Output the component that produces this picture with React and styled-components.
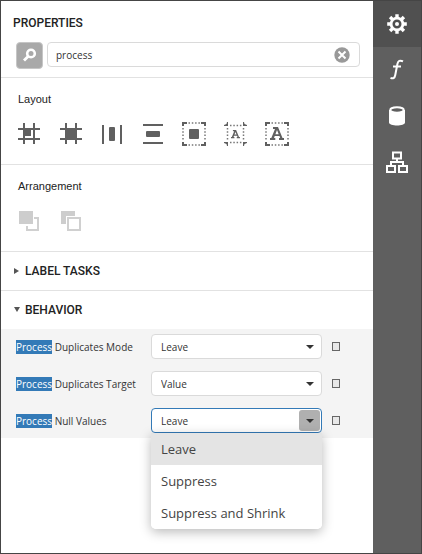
import React, { useState } from "react";
import styled, { createGlobalStyle, css } from "styled-components";

const GlobalStyle = createGlobalStyle`
  *, *::before, *::after { box-sizing: border-box; }
  body { margin: 0; background: #fff; }
  button, input, select { font: inherit; color: inherit; }
`;

const uiFont = `"Open Sans", "Noto Sans", sans-serif`;
const headingFont = `Roboto, "Liberation Sans", sans-serif`;

const Frame = styled.div`
  display: flex;
  min-height: 100vh;
  border: 1px solid #454545;
  background: #fff;
  color: #333;
  font-family: ${uiFont};
  font-size: 10px;
`;

const Panel = styled.main`
  flex: 1;
  min-width: 0;
`;

const Header = styled.header`
  padding: 14px 13px 8px 12px;
  border-bottom: 1px solid #e2e2e2;
`;

const Title = styled.h1`
  margin: 0;
  font: 500 12px/16px ${headingFont};
  color: #222;
`;

const SearchRow = styled.div`
  display: flex;
  align-items: flex-start;
  gap: 4px;
  margin: 11px 0 0 3px;
`;

const SearchButton = styled.button`
  display: flex;
  align-items: center;
  justify-content: center;
  width: 27px;
  height: 27px;
  padding: 0;
  border: 1px solid #c6c6c6;
  border-radius: 4px;
  background: #a9a9a9;
`;

const SearchBox = styled.div`
  display: flex;
  flex: 1;
  align-items: center;
  min-width: 0;
  height: 25px;
  padding: 0 9px 0 8px;
  border: 1px solid #dadada;
  border-radius: 4px;
`;

const SearchInput = styled.input`
  flex: 1;
  min-width: 0;
  padding: 0;
  border: 0;
  outline: 0;
  background: none;
  line-height: 16px;
`;

const IconButton = styled.button`
  display: flex;
  padding: 0;
  border: 0;
  background: none;
`;

const ToolSection = styled.section`
  padding: 13px 17px 17px;
  border-bottom: 1px solid #e2e2e2;
`;

const ToolTitle = styled.h2`
  margin: 0;
  font: 400 11px/16px "Liberation Sans", Arial, sans-serif;
  color: #222;
`;

const Toolbar = styled.div`
  display: flex;
  gap: 16px;
  margin-top: 14px;
`;

const GroupHeading = styled.h2`
  margin: 0;
  border-bottom: ${(p) => (p.$divided ? "1px solid #e2e2e2" : "0")};
`;

const GroupToggle = styled.button`
  display: flex;
  align-items: center;
  gap: 5px;
  width: 100%;
  height: 38px;
  padding: 0 13px;
  border: 0;
  background: none;
  font: 500 12px/16px ${headingFont};
  color: #222;
`;

const Editors = styled.div`
  display: grid;
  gap: 12px;
  padding: 5px 33px 5px 15px;
  background: #f4f4f4;
`;

const EditorRow = styled.div`
  display: grid;
  grid-template-columns: 125px minmax(0, 1fr) 8px;
  align-items: center;
  column-gap: 10px;
`;

const EditorLabel = styled.label`
  line-height: 14px;
  white-space: nowrap;
`;

const Match = styled.mark`
  background: #337ab7;
  color: #fff;
`;

const SelectWrap = styled.div`
  position: relative;
`;

const Select = styled.select`
  display: block;
  width: 100%;
  height: 25px;
  padding: 0 26px 0 9px;
  border: 1px solid ${(p) => (p.$open ? "#337ab7" : "#dadada")};
  border-radius: 4px;
  outline: 0;
  background: #fff;
  appearance: none;
`;

const Arrow = styled.span`
  position: absolute;
  top: 2px;
  right: 2px;
  display: flex;
  align-items: center;
  justify-content: center;
  width: 21px;
  height: 21px;
  border-radius: 3px;
  pointer-events: none;
  ${(p) => p.$open && css`background: #b0b0b0;`}
`;

const Marker = styled.button`
  width: 8px;
  height: 9px;
  padding: 0;
  border: 1px solid #666;
  background: #e8e8e8;
`;

const Popup = styled.ul`
  position: absolute;
  z-index: 1;
  top: 100%;
  left: 0;
  width: 100%;
  margin: 0;
  padding: 0;
  overflow: hidden;
  list-style: none;
  border-radius: 0 0 5px 5px;
  background: #fff;
  box-shadow: 0 3px 12px rgba(0, 0, 0, 0.28);
`;

const Option = styled.li`
  padding: 7px 10px;
  font-size: 13px;
  line-height: 18px;
  color: #444;
  cursor: pointer;
  background: ${(p) => (p.$selected ? "#e4e4e4" : "#fff")};
`;

const Tabs = styled.nav`
  flex: none;
  width: 48px;
  background: #5f5f5f;
`;

const Tab = styled.button`
  display: flex;
  align-items: center;
  justify-content: center;
  width: 100%;
  height: 46px;
  padding: 0;
  border: 0;
  background: ${(p) => (p.$active ? "#505050" : "transparent")};
`;

const Svg = ({ w = 24, h = w, children }) => (
  <svg width={w} height={h} viewBox={`0 0 ${w} ${h}`} fill="none" aria-hidden="true">
    {children}
  </svg>
);

const ToolSvg = ({ children }) => (
  <Svg w={25} h={26}>
    {children}
  </Svg>
);

const ink = "#606060";

const AlignGrid = () => (
  <ToolSvg>
    <path d="M6 8h7v4h-3v3H6z" fill={ink} />
    <path d="M10 12h3v3h-3z" fill={ink} />
    <path d="M6 2v21M16 2v21M0 8h22M0 18h22" stroke={ink} strokeWidth="2" />
    <path d="M7 15h6v2H7zM13 9h2v8h-2z" fill="#fff" />
  </ToolSvg>
);

const SizeGrid = () => (
  <ToolSvg>
    <path d="M7 2v21M17 2v21M1 8h22M1 18h22" stroke={ink} strokeWidth="2" />
    <path d="M7 8h10v10H7z" fill={ink} />
  </ToolSvg>
);

const CenterH = () => (
  <ToolSvg>
    <path d="M3 4v19M21 4v19" stroke={ink} strokeWidth="2" />
    <rect x="9" y="6" width="6" height="14" rx="1" fill={ink} />
  </ToolSvg>
);

const CenterV = () => (
  <ToolSvg>
    <path d="M2 4h20M2 22h20" stroke={ink} strokeWidth="2" />
    <rect x="5" y="10" width="14" height="6" rx="1" fill={ink} />
  </ToolSvg>
);

const BoundsFrame = () => (
  <>
    <path d="M0 5V1h5v2H2v2zM19 1h5v4h-2V3h-3zM0 21h2v2h3v2H0zM22 21h2v4h-5v-2h3z" fill={ink} />
    <path d="M6.500 2h12M6.500 24h12M1 7v13M23 7v13" stroke="#777" strokeWidth="1.500" strokeDasharray="1.500 1.800" />
  </>
);

const FitBounds = () => (
  <ToolSvg>
    <BoundsFrame />
    <rect x="7" y="8" width="10" height="10" rx="1" fill={ink} />
  </ToolSvg>
);

const letterA = "M3 0h5l4.500 11H14v2H9v-2h1.200l-.7-2H4.700L4 11h1.300v2H0v-2h1.300L5 2H3zM7 3 5.400 7.200h3.300z";

const FitText = () => (
  <ToolSvg>
    <path d="M5 1v4H1V4l2.500-1L4 1zM20 1v4h4V4l-2.500-1L21 1zM5 25v-4H1v1l2.500 1L4 25zM20 25v-4h4v1l-2.500 1L21 25z" fill={ink} />
    <path d="M7 4.500h12M7 21.500h12M4.500 7v13M20.500 7v13" stroke="#777" strokeWidth="1.500" strokeDasharray="1.500 1.800" />
    <path d={letterA} fill={ink} fillRule="evenodd" transform="translate(8 9) scale(.64)" />
  </ToolSvg>
);

const FitTextBounds = () => (
  <ToolSvg>
    <g transform="translate(1 0)">
      <BoundsFrame />
      <path d={letterA} fill={ink} fillRule="evenodd" transform="translate(5 6)" />
    </g>
  </ToolSvg>
);

const BringFront = () => (
  <ToolSvg>
    <path d="M9 10h11v12H9z" stroke="#d0d0d0" strokeWidth="2" />
    <path d="M0 2h16v16H0z" fill="#fff" />
    <path d="M1 3h14v13H1z" fill="#cdcdcd" />
  </ToolSvg>
);

const SendBack = () => (
  <ToolSvg>
    <path d="M2 3h14v13H2z" fill="#cdcdcd" />
    <path d="M7 8h16v16H7z" fill="#fff" />
    <path d="M9 10h12v12H9z" stroke="#d0d0d0" strokeWidth="2" />
  </ToolSvg>
);

const SearchIcon = () => (
  <Svg w={15}>
    <circle cx="9" cy="5.500" r="3.800" stroke="#fff" strokeWidth="2.600" />
    <path d="M6.500 8 2 12.500" stroke="#fff" strokeWidth="2.800" />
  </Svg>
);

const ClearIcon = () => (
  <Svg w={16}>
    <circle cx="8" cy="8" r="7.700" fill="#999" />
    <path d="m4.500 4.500 7 7M11.500 4.500l-7 7" stroke="#fff" strokeWidth="2" />
  </Svg>
);

const GearIcon = () => (
  <Svg w={22}>
    {[0, 45, 90, 135].map((a) => (
      <path key={a} d="M11 1.200v4M11 16.800v4" stroke="#fff" strokeWidth="3.400" transform={`rotate(${a} 11 11)`} />
    ))}
    <circle cx="11" cy="11" r="5.900" stroke="#fff" strokeWidth="2.800" />
    <circle cx="11" cy="11" r="2" fill="#fff" />
  </Svg>
);

const FunctionIcon = () => (
  <Svg w={22}>
    <path d="M17 2.300C14 .8 12 2 11.400 5L9.200 16.200C8.700 19 7 20 4.500 18.900M7 7.500h8" stroke="#fff" strokeWidth="2" />
  </Svg>
);

const DataIcon = () => (
  <Svg w={22}>
    <path d="M3 5v12.500c0 4 16 4 16 0V5z" fill="#fff" />
    <ellipse cx="11" cy="5" rx="6.700" ry="2.700" fill="#5f5f5f" stroke="#fff" strokeWidth="2" />
  </Svg>
);

const TreeIcon = () => (
  <Svg w={22}>
    <path d="M7 1.500h8v6H7zM1 15h8v6H1zM13 15h8v6h-8zM11 7v4M5 15v-4h12v4" stroke="#fff" strokeWidth="2" />
  </Svg>
);

const layoutTools = [
  ["Align to Grid", AlignGrid],
  ["Size to Grid", SizeGrid],
  ["Center Horizontally", CenterH],
  ["Center Vertically", CenterV],
  ["Fit Bounds to Container", FitBounds],
  ["Fit Text to Bounds", FitText],
  ["Fit Bounds to Text", FitTextBounds],
];

const arrangementTools = [
  ["Bring to Front", BringFront],
  ["Send to Back", SendBack],
];

const tabs = [
  ["Properties", GearIcon],
  ["Expressions", FunctionIcon],
  ["Field List", DataIcon],
  ["Report Explorer", TreeIcon],
];

const modes = ["Leave", "Suppress", "Suppress and Shrink"];

function Tools({ title, items }) {
  return (
    <ToolSection>
      <ToolTitle>{title}</ToolTitle>
      <Toolbar role="toolbar" aria-label={title}>
        {items.map(([label, Icon]) => (
          <IconButton key={label} type="button" aria-label={label}>
            <Icon />
          </IconButton>
        ))}
      </Toolbar>
    </ToolSection>
  );
}

function Group({ title, open, divided, onToggle }) {
  return (
    <GroupHeading $divided={divided}>
      <GroupToggle type="button" aria-expanded={open} onClick={onToggle}>
        <Svg w={6}>
          <path d={open ? "M0 0h6L3 5z" : "M0 0v6l5-3z"} fill="#555" />
        </Svg>
        {title}
      </GroupToggle>
    </GroupHeading>
  );
}

function Editor({ id, name, options, initiallyOpen = false }) {
  const [value, setValue] = useState(options[0]);
  const [open, setOpen] = useState(initiallyOpen);
  return (
    <EditorRow>
      <EditorLabel htmlFor={id}>
        <Match>Process</Match> {name}
      </EditorLabel>
      <SelectWrap>
        <Select id={id} value={value} $open={open} onChange={(e) => setValue(e.target.value)}>
          {options.map((o) => (
            <option key={o}>{o}</option>
          ))}
        </Select>
        <Arrow $open={open}>
          <Svg w={8} h={4}>
            <path d="M0 0h8L4 4z" fill="#333" />
          </Svg>
        </Arrow>
        {open && (
          <Popup role="listbox" aria-label={`Process ${name}`}>
            {options.map((o) => (
              <Option
                key={o}
                role="option"
                aria-selected={o === value}
                $selected={o === value}
                onClick={() => {
                  setValue(o);
                  setOpen(false);
                }}
              >
                {o}
              </Option>
            ))}
          </Popup>
        )}
      </SelectWrap>
      <Marker type="button" aria-label={`Process ${name} options`} />
    </EditorRow>
  );
}

export default function App() {
  const [query, setQuery] = useState("process");
  const [tasksOpen, setTasksOpen] = useState(false);
  const [behaviorOpen, setBehaviorOpen] = useState(true);
  const [tab, setTab] = useState("Properties");
  return (
    <>
      <GlobalStyle />
      <Frame>
        <Panel>
          <Header>
            <Title>PROPERTIES</Title>
            <SearchRow>
              <SearchButton type="button" aria-label="Search">
                <SearchIcon />
              </SearchButton>
              <SearchBox>
                <SearchInput aria-label="Search properties" value={query} onChange={(e) => setQuery(e.target.value)} />
                <IconButton type="button" aria-label="Clear search" onClick={() => setQuery("")}>
                  <ClearIcon />
                </IconButton>
              </SearchBox>
            </SearchRow>
          </Header>
          <Tools title="Layout" items={layoutTools} />
          <Tools title="Arrangement" items={arrangementTools} />
          <Group title="LABEL TASKS" divided open={tasksOpen} onToggle={() => setTasksOpen(!tasksOpen)} />
          <Group title="BEHAVIOR" open={behaviorOpen} onToggle={() => setBehaviorOpen(!behaviorOpen)} />
          {behaviorOpen && (
            <Editors>
              <Editor id="duplicates-mode" name="Duplicates Mode" options={modes} />
              <Editor id="duplicates-target" name="Duplicates Target" options={["Value", "Tag"]} />
              <Editor id="null-values" name="Null Values" options={modes} initiallyOpen />
            </Editors>
          )}
        </Panel>
        <Tabs aria-label="Panels">
          {tabs.map(([label, Icon]) => (
            <Tab key={label} type="button" aria-label={label} $active={tab === label} onClick={() => setTab(label)}>
              <Icon />
            </Tab>
          ))}
        </Tabs>
      </Frame>
    </>
  );
}
